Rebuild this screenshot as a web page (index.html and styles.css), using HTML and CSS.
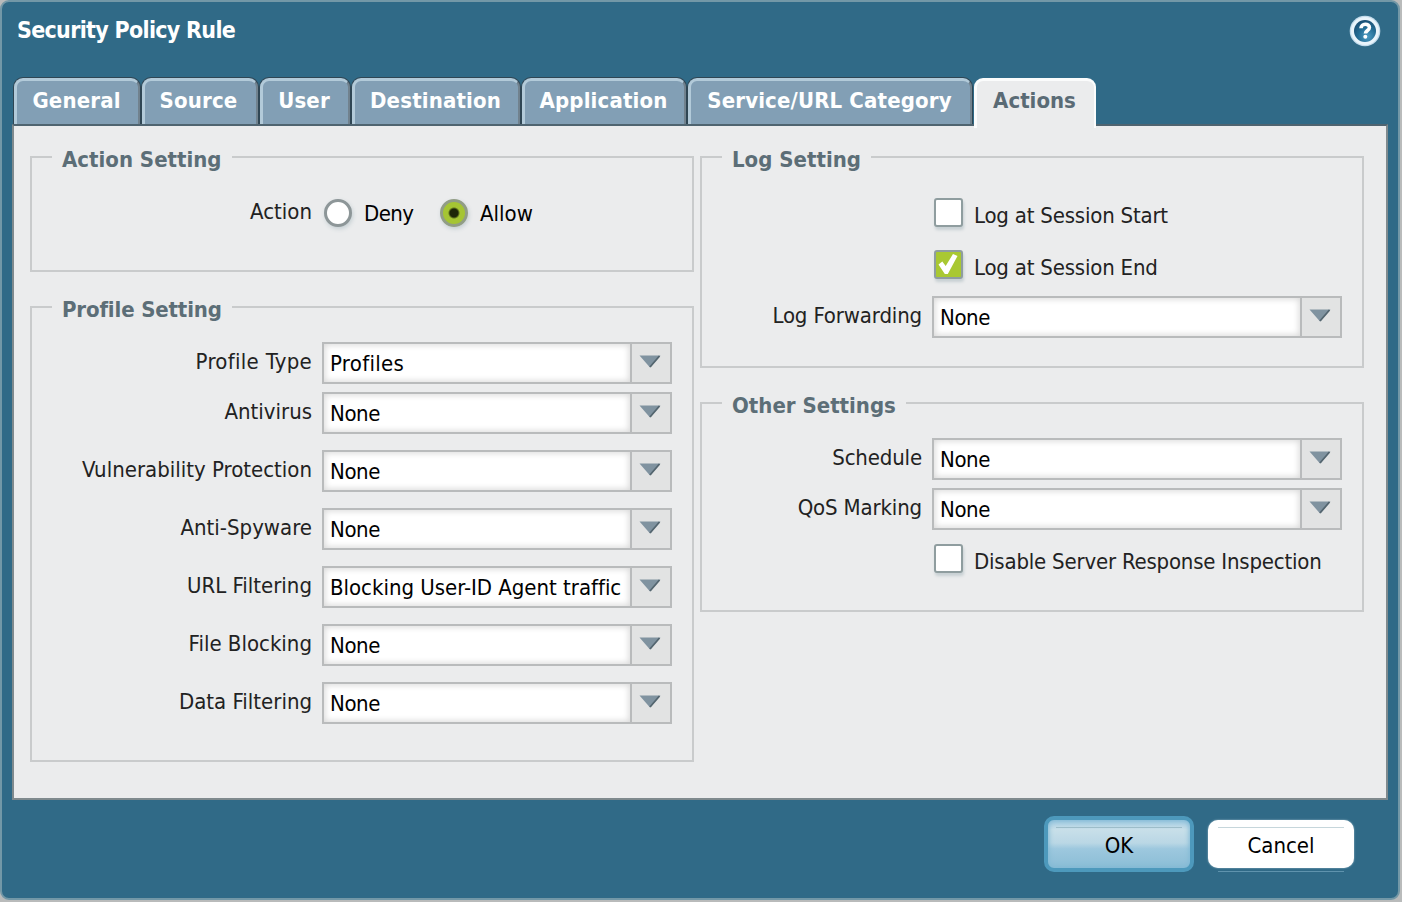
FILE: index.html
```html
<!DOCTYPE html>
<html lang="en">
<head>
    <meta charset="UTF-8">
    <meta name="viewport" content="width=device-width, initial-scale=1.0">
    <title>Security Policy Rule</title>
    <link rel="stylesheet" href="styles.css">
</head>
<body>
    <div class="dialog">
        <div class="dialog-header">
            <h1 class="dialog-title">Security Policy Rule</h1>
            <svg class="help-icon" width="32" height="32" viewBox="0 0 32 32">
                <defs>
                    <radialGradient id="helpFill" cx="0.6" cy="0.75" r="0.75">
                        <stop offset="0" stop-color="#4d9cc4"/>
                        <stop offset="0.55" stop-color="#236c94"/>
                        <stop offset="1" stop-color="#1b4f74"/>
                    </radialGradient>
                    <symbol id="arrow" viewBox="0 0 22 14">
                        <path d="M0.500 0.500h21L11 12.500z" fill="#8093a0"/>
                        <path d="M20.500 1L11 12" stroke="#53656f" stroke-width="1.8"/>
                    </symbol>
                </defs>
                <circle cx="16" cy="16" r="15.3" fill="#c3dcec"/>
                <circle cx="16" cy="16" r="14" fill="#e9f4fb"/>
                <circle cx="16" cy="16" r="11" fill="url(#helpFill)"/>
                <path d="M12 13.200c0-5.200 8.400-5.200 8.400-.6 0 3-4 2.900-4 6" fill="none" stroke="#fff" stroke-width="3.6"/>
                <circle cx="16.300" cy="21.800" r="2" fill="#fff"/>
            </svg>
        </div>

        <!-- Tabs -->
        <div class="tabs">
            <div class="tab tab-general">General</div>
            <div class="tab tab-source">Source</div>
            <div class="tab tab-user">User</div>
            <div class="tab tab-destination">Destination</div>
            <div class="tab tab-application">Application</div>
            <div class="tab tab-service">Service/URL Category</div>
            <div class="tab tab-actions active">Actions</div>
        </div>

        <div class="panel">
            <div class="column">
                <fieldset class="group action-group">
                    <legend>Action Setting</legend>
                    <div class="row">
                        <span class="label">Action</span>
                        <span class="radio"></span>
                        <span class="option deny">Deny</span>
                        <span class="radio selected"></span>
                        <span class="option">Allow</span>
                    </div>
                </fieldset>

                <fieldset class="group profile-group">
                    <legend>Profile Setting</legend>
                    <div class="row tight">
                        <span class="label wide">Profile Type</span>
                        <div class="combo"><span class="value wide">Profiles</span><span class="trigger"><svg width="22" height="14"><use href="#arrow"/></svg></span></div>
                    </div>
                    <div class="row">
                        <span class="label">Antivirus</span>
                        <div class="combo"><span class="value">None</span><span class="trigger"><svg width="22" height="14"><use href="#arrow"/></svg></span></div>
                    </div>
                    <div class="row">
                        <span class="label">Vulnerability Protection</span>
                        <div class="combo"><span class="value">None</span><span class="trigger"><svg width="22" height="14"><use href="#arrow"/></svg></span></div>
                    </div>
                    <div class="row">
                        <span class="label">Anti-Spyware</span>
                        <div class="combo"><span class="value">None</span><span class="trigger"><svg width="22" height="14"><use href="#arrow"/></svg></span></div>
                    </div>
                    <div class="row">
                        <span class="label">URL Filtering</span>
                        <div class="combo"><span class="value long">Blocking User-ID Agent traffic</span><span class="trigger"><svg width="22" height="14"><use href="#arrow"/></svg></span></div>
                    </div>
                    <div class="row">
                        <span class="label">File Blocking</span>
                        <div class="combo"><span class="value">None</span><span class="trigger"><svg width="22" height="14"><use href="#arrow"/></svg></span></div>
                    </div>
                    <div class="row">
                        <span class="label">Data Filtering</span>
                        <div class="combo"><span class="value">None</span><span class="trigger"><svg width="22" height="14"><use href="#arrow"/></svg></span></div>
                    </div>
                </fieldset>
            </div>

            <div class="column right">
                <fieldset class="group log-group">
                    <legend>Log Setting</legend>
                    <div class="check-row">
                        <span class="checkbox"></span>
                        <span class="check-label">Log at Session Start</span>
                    </div>
                    <div class="check-row">
                        <span class="checkbox checked"><svg width="25" height="25" viewBox="0 0 25 25"><path d="M2.500 12.500l3.800-3 3.400 4.500L17 2l4.500 2L11.800 22H8.800z" fill="#fff"/></svg></span>
                        <span class="check-label">Log at Session End</span>
                    </div>
                    <div class="row">
                        <span class="label">Log Forwarding</span>
                        <div class="combo"><span class="value">None</span><span class="trigger"><svg width="22" height="14"><use href="#arrow"/></svg></span></div>
                    </div>
                </fieldset>

                <fieldset class="group other-group">
                    <legend>Other Settings</legend>
                    <div class="row tight">
                        <span class="label">Schedule</span>
                        <div class="combo"><span class="value">None</span><span class="trigger"><svg width="22" height="14"><use href="#arrow"/></svg></span></div>
                    </div>
                    <div class="row">
                        <span class="label">QoS Marking</span>
                        <div class="combo"><span class="value">None</span><span class="trigger"><svg width="22" height="14"><use href="#arrow"/></svg></span></div>
                    </div>
                    <div class="check-row">
                        <span class="checkbox"></span>
                        <span class="check-label">Disable Server Response Inspection</span>
                    </div>
                </fieldset>
            </div>
        </div>

        <div class="footer">
            <button class="button ok">OK</button>
            <button class="button cancel">Cancel</button>
        </div>
    </div>
</body>
</html>
```
FILE: styles.css
```css
* {
    box-sizing: border-box;
}
body {
    margin: 0;
    width: 1402px;
    height: 902px;
    overflow: hidden;
    background-color: #b9bbbb;
    font-family: "DejaVu Sans Condensed", "DejaVu Sans", sans-serif;
    font-stretch: condensed;
    font-size: 22px;
    line-height: 26px;
    font-variant-ligatures: none;
    color: #222;
    white-space: nowrap;
}
.dialog {
    width: 1400px;
    height: 900px;
    background-color: #306a87;
    border: 2px solid #7398a7;
    border-radius: 9px;
    display: flex;
    flex-direction: column;
}
.dialog-header {
    height: 76px;
    padding: 13px 17px 0 15px;
    display: flex;
    justify-content: space-between;
    align-items: flex-start;
}
.dialog-title {
    margin: 2px 0 0;
    font-size: 23px;
    line-height: 26px;
    letter-spacing: -0.7px;
    color: #fff;
}
.help-icon {
    display: block;
}

/* Tabs */
.tabs {
    display: flex;
    height: 48px;
    margin-left: 12px;
}
.tab {
    height: 46px;
    margin-right: 2px;
    padding: 7px 2px 0 0;
    text-align: center;
    font-weight: bold;
    letter-spacing: 0.15px;
    color: #fff;
    background-color: #829fb5;
    border: 3px solid #b2cad9;
    border-right: 2px solid #71828e;
    border-bottom: 0;
    border-radius: 9px 9px 0 0;
    box-shadow: 0 0 0 1px #2f4654;
}
.tab-general { width: 126px; }
.tab-source { width: 116px; padding-right: 4px; }
.tab-user { width: 90px; padding-right: 3px; }
.tab-destination { width: 168px; }
.tab-application { width: 164px; }
.tab-service { width: 284px; }
.tab-actions { width: 122px; }
.tab.active {
    height: 50px;
    margin-right: 0;
    position: relative;
    letter-spacing: 0;
    color: #5a6b75;
    background-color: #ebeced;
    border-color: #fbfcfc;
    box-shadow: none;
}

.panel {
    width: 1376px;
    height: 676px;
    margin: -2px 0 0 10px;
    padding: 15px 0 0 16px;
    border: 2px solid #7f8a8e;
    border-top-color: #4f6470;
    background-color: #ebeced;
    display: flex;
    gap: 6px;
}
.column {
    width: 664px;
    display: flex;
    flex-direction: column;
    gap: 19px;
}
.group {
    margin: 0;
    padding: 0;
    border: 2px solid #c9cbcc;
}
.group legend {
    margin-left: 20px;
    padding: 6px 10px 0;
    font-weight: bold;
    color: #5c6e77;
}
.profile-group legend {
    letter-spacing: -0.15px;
}
.action-group { height: 131px; }
.profile-group { height: 471px; padding-top: 19px; }
.log-group { height: 227px; padding-top: 25px; }
.other-group { height: 225px; padding-top: 19px; }

.row {
    display: flex;
    align-items: center;
    height: 42px;
    margin-bottom: 16px;
}
.row.tight {
    margin-bottom: 8px;
}
.label {
    width: 280px;
    margin: -2px 10px 0 0;
    text-align: right;
}
.right .label {
    width: 220px;
    letter-spacing: -0.15px;
}
.combo {
    width: 350px;
    height: 42px;
    display: flex;
    border: 2px solid #b9bbbc;
    background-color: #fff;
    color: #000;
}
.right .combo {
    width: 410px;
}
.value {
    flex: 1;
    min-width: 0;
    padding: 7px 0 0 6px;
    letter-spacing: -0.4px;
    box-shadow: inset 0 0 6px 1px #d8d8d8;
}
.value.long {
    letter-spacing: -0.02px;
}
.wide {
    letter-spacing: 0.3px;
}
.trigger {
    width: 40px;
    padding: 11px 0 0 7px;
    border-left: 2px solid #b9bbbc;
    background-color: #e2e3e3;
}
.trigger svg {
    display: block;
}

/* Radios and checkboxes */
.action-group .row {
    margin-top: 19px;
}
.radio {
    width: 28px;
    height: 28px;
    margin: 0 12px 0 2px;
    border: 3px solid #8d9698;
    border-radius: 50%;
    background-color: #fff;
    box-shadow: 1px 2px 4px #c5cfd3;
}
.radio.selected {
    border-color: #919d86;
    background: radial-gradient(circle, #1e2608 0, #1e2608 4px, #a5c533 6px);
}
.option {
    margin-top: 2px;
    color: #000;
}
.deny {
    width: 74px;
    letter-spacing: -0.6px;
}
.check-row {
    display: flex;
    height: 52px;
    padding-left: 232px;
}
.checkbox {
    width: 29px;
    height: 29px;
    margin-right: 11px;
    border: 2px solid #8f9d9f;
    border-radius: 3px;
    background-color: #fff;
    box-shadow: 1px 3px 3px #c7d0d3;
}
.checkbox.checked {
    background-color: #a9c832;
}
.checkbox svg {
    display: block;
}
.check-label {
    margin-top: 5px;
    letter-spacing: -0.2px;
}
.log-group .check-row + .row {
    margin-top: -6px;
}
.other-group .check-row {
    margin-top: -2px;
}

.footer {
    display: flex;
    justify-content: flex-end;
    gap: 14px;
    padding: 16px 44px 0 0;
}
.button {
    position: relative;
    padding: 4px 0 0;
    border: 0;
    border-radius: 10px;
    font: inherit;
    color: #000;
}
/* thin highlight line along the top */
.button::before {
    content: "";
    position: absolute;
    top: 7px;
    left: 10px;
    right: 10px;
    border-top: 1px solid #c6d6db;
}
.ok {
    width: 150px;
    height: 56px;
    border: 4px solid #4d99bc;
    background: linear-gradient(#a4cce2, #c8dfe9 20%, #bad7e5 48%, #9dc8de 60%, #8bbdd6);
    box-shadow: inset 0 0 5px 1px #81b9d5;
}
.ok::before {
    left: 8px;
    right: 8px;
    border-color: #9dbdc9;
}
.cancel {
    width: 146px;
    height: 48px;
    margin-top: 4px;
    background-color: #fff;
    box-shadow: 0 0 2px #a9c3d0;
}
.cancel::after {
    content: "";
    position: absolute;
    bottom: -4px;
    left: 10px;
    right: 10px;
    border-top: 1px solid #5f93ad;
}
```
